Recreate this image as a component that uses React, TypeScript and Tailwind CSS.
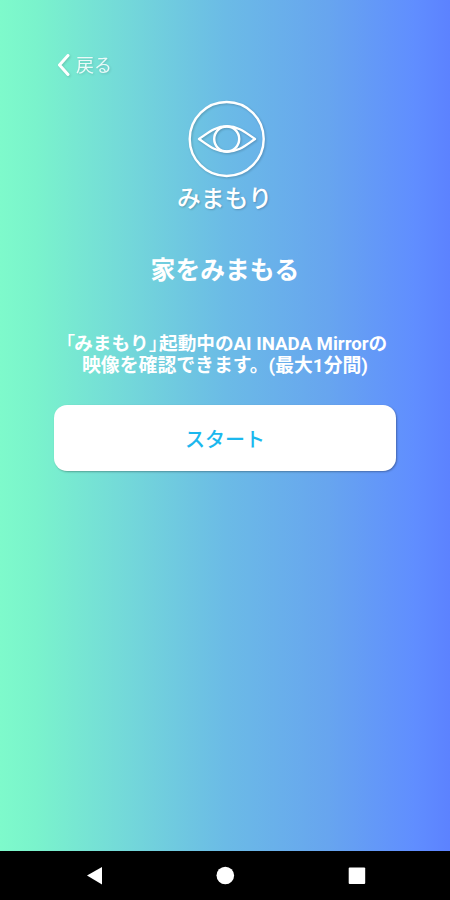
function BackIcon() {
  return (
    <svg width="14" height="24" viewBox="0 0 14 24" fill="none">
      <path d="M11 2.5L2.5 12L11 21.5" stroke="#fff" strokeWidth="3" strokeLinecap="round" strokeLinejoin="round" />
    </svg>
  );
}

function EyeIcon() {
  return (
    <svg
      width="78"
      height="78"
      viewBox="0 0 78 78"
      fill="none"
      stroke="#fff"
      strokeWidth="2.4"
      strokeLinejoin="round"
      className="drop-shadow-[1px_1px_1px_rgba(0,0,0,0.2)]"
    >
      <circle cx="38.7" cy="39" r="37" />
      <path d="M11 39C20 33 27 26.3 39 26.3C51 26.3 58 33 67 39C58 45 51 51.7 39 51.7C27 51.7 20 45 11 39Z" />
      <circle cx="38.7" cy="39" r="12.5" />
    </svg>
  );
}

function NavBar() {
  return (
    <nav className="h-[49px] bg-black">
      <svg width="450" height="49" fill="#fff">
        <path d="M87 24.5L102 16V33.5Z" />
        <circle cx="225.3" cy="24.5" r="8.8" />
        <rect x="348.7" y="16.5" width="16.5" height="16.5" rx="1" />
      </svg>
    </nav>
  );
}

export default function App() {
  return (
    <div className="flex h-[900px] w-[450px] flex-col bg-[linear-gradient(90deg,#7efacb_0%,#7af3cc_8%,#74dbd8_26%,#6bbbe6_50%,#67a5ef_73%,#608eff_92%,#5c82ff_100%)] font-['Roboto','Noto_Sans_CJK_JP',sans-serif] text-white">
      <main className="flex flex-1 flex-col items-center">
        <button className="mt-[53px] ml-[57px] flex h-6 items-center gap-[5px] self-start text-[18px] leading-6 drop-shadow-[1px_1px_1px_rgba(0,0,0,0.15)]">
          <BackIcon />
          <span className="pt-0.5 opacity-85">戻る</span>
        </button>

        <div className="mt-[23px] ml-[3px]">
          <EyeIcon />
        </div>
        <p className="mt-[4px] mr-px text-[23.8px] leading-[34px] font-medium [text-shadow:1px_1px_2px_rgba(0,0,0,0.2)]">
          みまもり
        </p>

        <h1 className="mt-[37px] text-[24.8px] leading-9 font-bold">家をみまもる</h1>

        <div className="mt-[44px] text-center leading-[22px] font-bold whitespace-nowrap">
          <p className="ml-[3px] text-[18.65px]">
            <span className="-mr-px font-medium [font-feature-settings:'halt']">「</span>みまもり
            <span className="mr-px font-medium [font-feature-settings:'halt']">」</span>起動中のAI INADA Mirrorの
          </p>
          <p className="text-[18.85px]">映像を確認できます。(最大1分間)</p>
        </div>

        <button className="mt-[28px] h-[66px] w-[342px] rounded-[13px] bg-white pt-[3px] text-[20px] font-medium text-[#1cb8ee] shadow-[1px_1px_2px_rgba(0,0,0,0.3)]">
          スタート
        </button>
      </main>
      <NavBar />
    </div>
  );
}
